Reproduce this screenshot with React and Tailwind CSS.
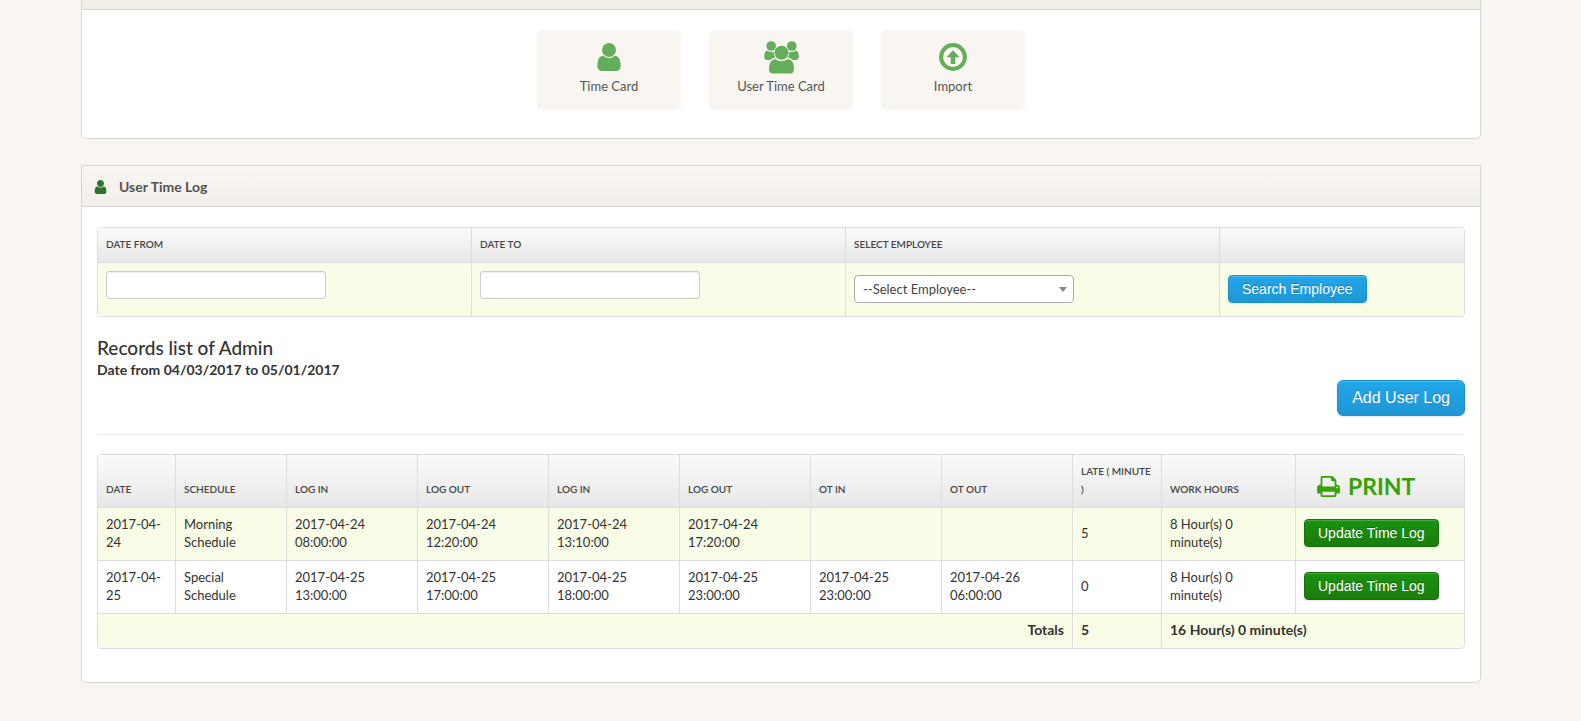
const USER_BODY =
  "M1536 1399q0 109-62.5 187t-150.5 78h-854q-88 0-150.5-78t-62.5-187q0-85 8.5-160.5t31.5-152 58.5-131 94-89 134.5-34.5q131 128 313 128t313-128q76 0 134.5 34.5t94 89 58.5 131 31.5 152 8.5 160.5z";
const USER_HEAD =
  "M1280 512q0 159-112.5 271.5t-271.5 112.5-271.5-112.5-112.5-271.5 112.5-271.5 271.5-112.5 271.5 112.5 112.5 271.5z";

function UserIcon({ className }) {
  return (
    <svg viewBox="256 128 1280 1536" fill="currentColor" aria-hidden="true" className={className}>
      <path d={USER_BODY} />
      <path d={USER_HEAD} />
    </svg>
  );
}

function UsersIcon({ className }) {
  return (
    <svg viewBox="0 0 35 33" fill="currentColor" aria-hidden="true" className={className}>
      <circle cx="7.2" cy="5" r="4.8" />
      <circle cx="27.8" cy="5" r="4.8" />
      <path d="M3 9.4Q7.2 12.2 9.8 10.6Q9.2 14 11.4 16.6Q8 17 6.4 19H2.6Q0.2 18.6 0.2 15.6Q0.2 10.2 3 9.4z" />
      <path d="M32 9.4Q27.8 12.2 25.2 10.6Q25.8 14 23.6 16.6Q27 17 28.6 19H32.4Q34.8 18.6 34.8 15.6Q34.8 10.2 32 9.4z" />
      <circle cx="17.5" cy="11.8" r="7" />
      <path d="M11 18Q17.5 22.4 24 18Q30 18.8 30 28.2Q30 32.4 26 32.6H9Q5 32.4 5 28.2Q5 18.8 11 18z" />
    </svg>
  );
}

function UploadIcon({ className }) {
  return (
    <svg viewBox="0 0 28 28" aria-hidden="true" className={className}>
      <circle cx="14" cy="14" r="11.9" fill="none" stroke="currentColor" strokeWidth="4" />
      <path d="M14 7.3L20.6 14.2H16.3V21H11.7V14.2H7.4z" fill="currentColor" />
    </svg>
  );
}

function PrintIcon({ className }) {
  return (
    <svg viewBox="64 128 1664 1536" fill="currentColor" aria-hidden="true" className={className}>
      <path d="M448 1536h896v-256h-896v256zm0-640h896v-384h-160q-40 0-68-28t-28-68v-160h-640v640zm1152 64q0-26-19-45t-45-19-45 19-19 45 19 45 45 19 45-19 19-45zm128 0v416q0 13-9.5 22.5t-22.5 9.5h-224v160q0 40-28 68t-68 28h-960q-40 0-68-28t-28-68v-160h-224q-13 0-22.5-9.5t-9.5-22.5v-416q0-79 56.5-135.5t135.5-56.5h64v-544q0-40 28-68t68-28h672q40 0 88 20t76 48l152 152q28 28 48 76t20 88v256h64q79 0 135.5 56.5t56.5 135.5z" />
    </svg>
  );
}

const shortcuts = [
  { label: "Time Card", Icon: UserIcon, size: "h-7 w-[26px]" },
  { label: "User Time Card", Icon: UsersIcon, size: "h-[33px] w-[35px]" },
  { label: "Import", Icon: UploadIcon, size: "size-7" },
];

const headings = ["Date", "Schedule", "Log In", "Log Out", "Log In", "Log Out", "OT In", "OT Out", "Late ( Minute )", "Work Hours"];

const rows = [
  ["2017-04-24", "Morning Schedule", "2017-04-24 08:00:00", "2017-04-24 12:20:00", "2017-04-24 13:10:00", "2017-04-24 17:20:00", "", "", "5", "8 Hour(s) 0 minute(s)"],
  ["2017-04-25", "Special Schedule", "2017-04-25 13:00:00", "2017-04-25 17:00:00", "2017-04-25 18:00:00", "2017-04-25 23:00:00", "2017-04-25 23:00:00", "2017-04-26 06:00:00", "0", "8 Hour(s) 0 minute(s)"],
];

const tableClass =
  "w-full table-fixed border-separate border-spacing-0 overflow-hidden rounded border border-[#ddd] text-left";
const headRow = "bg-linear-to-b from-[#fafafa] to-[#e8e8e8]";
const th = "border-l border-[#ddd] px-2 pt-[7px] pb-[9px] align-bottom text-[10px] leading-[18px] font-semibold text-[#444] uppercase first:border-l-0";
const td = "border-t border-l border-[#ddd] px-2 pt-[7px] pb-[9px] first:border-l-0";
const inputClass =
  "mt-px block h-7 w-[220px] max-w-full rounded-[3px] border border-[#ccc] bg-white px-2 shadow-[inset_0_1px_1px_rgba(0,0,0,0.075)]";
const blueButton =
  "border border-[#1c8fcb] bg-linear-to-b from-[#22a7ec] to-[#1f97d3] font-['Liberation_Sans',Arial,sans-serif] text-white shadow-[inset_0_1px_0_rgba(255,255,255,0.2),0_1px_2px_rgba(0,0,0,0.1)] [text-shadow:0_-1px_0_rgba(0,0,0,0.25)]";
const greenButton =
  "h-7 rounded border border-[#176f0c] bg-linear-to-b from-[#189310] to-[#1c7c0c] px-[13px] font-['Liberation_Sans',Arial,sans-serif] text-sm leading-5 text-white shadow-[inset_0_1px_0_rgba(255,255,255,0.2),0_1px_2px_rgba(0,0,0,0.1)] [text-shadow:0_-1px_0_rgba(0,0,0,0.25)]";

export default function App() {
  return (
    <main className="min-h-screen bg-[#f9f6f1] pr-[100px] pb-[38px] pl-[81px] font-['Trebuchet_MS',Lato,sans-serif] text-[13px] leading-[18px] text-[#333]">
      <section className="rounded-b-[5px] border border-t-0 border-[#d5d5d5] bg-white">
        <div className="h-[10px] border-b border-[#d5d5d5] bg-[#f1eee9]" />
        <nav className="flex justify-center gap-7 pt-5 pb-7">
          {shortcuts.map(({ label, Icon, size }) => (
            <a key={label} href="#" className="flex h-20 w-36 flex-col items-center rounded-[5px] bg-[#f9f6f1] pt-[11px] text-[#555]">
              <span className="flex h-8 items-center justify-center text-[#63ad5b]">
                <Icon className={size} />
              </span>
              <span className="mt-1">{label}</span>
            </a>
          ))}
        </nav>
      </section>

      <section className="mt-[26px] rounded-b-[5px] border border-[#d5d5d5] bg-white">
        <header className="flex h-[41px] items-center gap-3 border-b border-[#d5d5d5] bg-linear-to-b from-[#f9f6f1] to-[#f2efea] px-3 pt-0.5">
          <UserIcon className="h-[14px] w-[13px] text-[#2e7329]" />
          <h3 className="text-sm font-bold text-[#525252]">User Time Log</h3>
        </header>

        <div className="px-[15px] pt-5 pb-[33px]">
          <table className={tableClass}>
            <colgroup>
              <col className="w-[373px]" />
              <col className="w-[374px]" />
              <col className="w-[374px]" />
              <col className="w-[245px]" />
            </colgroup>
            <thead>
              <tr className={headRow}>
                <th className={th}><label htmlFor="date-from">Date From</label></th>
                <th className={th}><label htmlFor="date-to">Date To</label></th>
                <th className={th}><label htmlFor="employee">Select Employee</label></th>
                <th className={th} />
              </tr>
            </thead>
            <tbody>
              <tr className="h-[54px] bg-[#f9fce6]">
                <td className={`${td} align-top`}><input id="date-from" type="text" className={inputClass} /></td>
                <td className={`${td} align-top`}><input id="date-to" type="text" className={inputClass} /></td>
                <td className={td}>
                  <div className="relative w-[220px] max-w-full">
                    <select id="employee" className="block h-7 w-full appearance-none rounded border border-[#aaa] bg-white pr-5 pl-2 text-[#444]">
                      <option>--Select Employee--</option>
                    </select>
                    <svg viewBox="0 0 8 5" className="pointer-events-none absolute top-3 right-[7px] h-[5px] w-2" aria-hidden="true">
                      <path d="M0 0h8L4 5z" fill="#888" />
                    </svg>
                  </div>
                </td>
                <td className={td}>
                  <button type="button" className={`${blueButton} block h-7 rounded px-[13px] text-sm leading-5`}>Search Employee</button>
                </td>
              </tr>
            </tbody>
          </table>

          <h4 className="mt-[19px] text-[19px] leading-6 font-medium">Records list of Admin</h4>
          <p className="text-sm leading-5 font-bold">Date from 04/03/2017 to 05/01/2017</p>
          <div className="flex justify-end">
            <button type="button" className={`${blueButton} h-9 rounded-md px-[14px] text-base leading-5`}>Add User Log</button>
          </div>
          <hr className="mt-[18px] mb-[19px] border-[#eee]" />

          <table className={tableClass}>
            <colgroup>
              <col className="w-[77px]" />
              <col className="w-[111px]" />
              <col span="6" className="w-[131px]" />
              <col className="w-[89px]" />
              <col className="w-[134px]" />
              <col className="w-[169px]" />
            </colgroup>
            <thead>
              <tr className={headRow}>
                {headings.map((text, i) => (
                  <th key={i} className={th}>{text}</th>
                ))}
                <th className={th}>
                  <a href="#" className="ml-[13px] flex items-center gap-2 text-[23px] leading-6 font-bold text-[#36a207]">
                    <PrintIcon className="h-[21px] w-[23px]" />
                    Print
                  </a>
                </th>
              </tr>
            </thead>
            <tbody>
              {rows.map((row) => (
                <tr key={row[0]} className="odd:bg-[#f9fce6]">
                  {row.map((text, i) => (
                    <td key={i} className={td}>{text}</td>
                  ))}
                  <td className={td}>
                    <button type="button" className={greenButton}>Update Time Log</button>
                  </td>
                </tr>
              ))}
              <tr className="bg-[#f9fce6] text-sm leading-[18px] font-bold">
                <td colSpan="8" className={`${td} text-right`}>Totals</td>
                <td className={td}>5</td>
                <td colSpan="2" className={td}>16 Hour(s) 0 minute(s)</td>
              </tr>
            </tbody>
          </table>
        </div>
      </section>
    </main>
  );
}
